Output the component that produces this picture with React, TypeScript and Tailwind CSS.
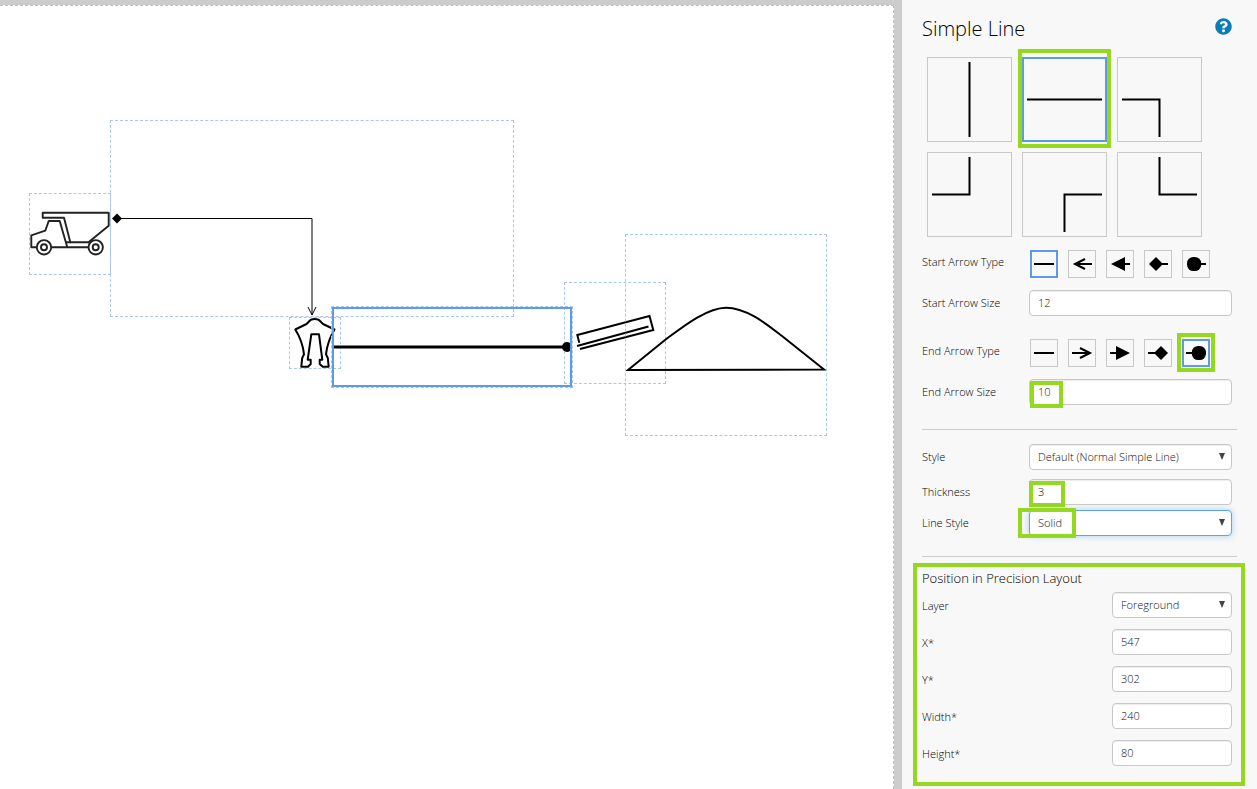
import { useState } from 'react';
import type { ReactNode } from 'react';
import { FaQuestionCircle } from 'react-icons/fa';

const lineShapes = [
    { name: 'Vertical', d: 'M42.5 5V80' },
    { name: 'Horizontal', d: 'M5 42.5H80' },
    { name: 'Left to bottom', d: 'M5 42.5H42.5V80' },
    { name: 'Left to top', d: 'M5 42.5H42.5V5' },
    { name: 'Right to bottom', d: 'M80 42.5H42.5V80' },
    { name: 'Right to top', d: 'M80 42.5H42.5V5' },
];

const arrowTypes = ['None', 'Open', 'Filled', 'Diamond', 'Circle'];

const fieldClass = 'block h-[26px] w-full rounded-[4px] border bg-white px-2 text-[11px] text-[#111] outline-none';
const idleClass = 'border-[#c8c8c8] shadow-[inset_0_1px_1px_rgba(0,0,0,0.08)]';
const focusClass = 'border-[#5aa9e6] shadow-[0_0_6px_rgba(90,169,230,0.5)]';

function Highlight({ className }: { className: string }) {
    return <span className={`pointer-events-none absolute border-4 border-[#95d820] ${className}`} />;
}

function ArrowIcon({ type, end }: { type: string; end?: boolean }) {
    return (
        <svg viewBox="0 0 28 28" className="h-[28px] w-[28px] shrink-0" stroke="#000" strokeWidth="2" fill="none">
            {type === 'None' && <path d="M4 14H24" />}
            <g transform={end ? 'translate(29 0) scale(-1 1)' : 'translate(0 0)'}>
                {type === 'Open' && <path d={end ? 'M7 14H25M17 9L7 14L17 19' : 'M7 14H24M17 9L7 14L17 19'} />}
                {type === 'Filled' && (
                    <>
                        <path d={end ? 'M15 14H25' : 'M15 14H24'} />
                        <path d="M5 14L19 7V21Z" fill="#000" stroke="none" />
                    </>
                )}
                {type === 'Diamond' && (
                    <>
                        <path d={end ? 'M12 14H25' : 'M12 14H24'} />
                        <path d="M5 14L12 7L19 14L12 21Z" fill="#000" stroke="none" />
                    </>
                )}
                {type === 'Circle' && (
                    <>
                        <path d={end ? 'M12 14H25' : 'M12 14H24'} />
                        <rect x="5" y="7" width="14.2" height="14" rx="6.4" fill="#000" stroke="none" />
                    </>
                )}
            </g>
        </svg>
    );
}

function ArrowPicker({ label, value, onChange, end, children }: {
    label: string;
    value: string;
    onChange: (type: string) => void;
    end?: boolean;
    children?: ReactNode;
}) {
    return (
        <div className="flex items-center" role="group" aria-label={label}>
            <span className="w-[108px] shrink-0 pb-1 text-[11px]">{label}</span>
            <div className="relative flex gap-[10px]">
                {arrowTypes.map(type => (
                    <button
                        key={type}
                        type="button"
                        aria-label={type}
                        onClick={() => onChange(type)}
                        className={`flex h-[28px] w-[28px] items-center justify-center ${value === type ? 'border-2 border-[#5e9aea]' : 'border border-[#c8c8c8]'}`}
                    >
                        <ArrowIcon type={type} end={end} />
                    </button>
                ))}
                {children}
            </div>
        </div>
    );
}

function Field({ id, label, children }: { id: string; label: string; children: ReactNode }) {
    return (
        <div className="flex items-center pr-[5px]">
            <label htmlFor={id} className="w-[107px] shrink-0 text-[11px]">{label}</label>
            <div className="relative flex-1">{children}</div>
        </div>
    );
}

function PositionField({ id, label, children }: { id: string; label: string; children: ReactNode }) {
    return (
        <div className="flex h-[26px] items-center justify-between pr-[5px]">
            <label htmlFor={id} className="pt-[3px] text-[11px]">{label}</label>
            <div className="w-[120px]">{children}</div>
        </div>
    );
}

function TextInput({ id, value }: { id: string; value: string }) {
    return <input id={id} className={`${fieldClass} ${idleClass} pb-[2px]`} defaultValue={value} />;
}

function Select({ id, options, focused }: { id: string; options: string[]; focused?: boolean }) {
    return (
        <div className="relative">
            <select id={id} className={`${fieldClass} appearance-none ${focused ? focusClass : idleClass}`}>
                {options.map(option => <option key={option}>{option}</option>)}
            </select>
            <svg viewBox="0 0 6 7" className="pointer-events-none absolute top-[9px] right-[7px] h-[7px] w-[6px]">
                <path d="M0 0H6L3 7Z" fill="#444" />
            </svg>
        </div>
    );
}

function Canvas() {
    const node = 'absolute outline-1 -outline-offset-1 outline-dashed outline-[#a9c6f2]';
    return (
        <main className="flex min-w-0 flex-1 bg-[#ccc] pt-[5px] pr-2">
            <div className="relative flex-1 overflow-hidden border-t border-r border-dashed border-[#a9c0e8] bg-white">
                {/* truck */}
                <div className={`${node} top-[187px] left-[29px] h-[82px] w-[82px]`}>
                    <svg viewBox="29 193 82 82" className="h-full w-full" fill="none" stroke="#222" strokeWidth="1.9" strokeLinejoin="round">
                        <path d="M42.7 212.7H108.7V225.7L88.5 242.3H70.3L64 217.7H42.7Z" />
                        <path d="M36.7 247.3H31.3V235.3L45.3 230.7L48.7 221H59.7L67.3 247.3M66 242.3H71M52 247.3H88" />
                        <circle cx="44" cy="247.3" r="7.2" />
                        <circle cx="44" cy="247.3" r="3" />
                        <circle cx="95.7" cy="247.3" r="7.2" />
                        <circle cx="95.7" cy="247.3" r="3" />
                    </svg>
                </div>

                {/* elbow connector */}
                <div className={`${node} top-[114px] left-[110px] h-[197px] w-[404px]`}>
                    <svg viewBox="110 120 404 197" className="h-full w-full" fill="none" stroke="#000">
                        <path d="M117 218.5H312V315" />
                        <path d="M308 307L312 315L316 307" />
                        <path d="M112 218.5L117 213.5L122 218.5L117 223.5Z" fill="#000" stroke="none" />
                    </svg>
                </div>

                {/* grabber */}
                <div className={`${node} top-[311px] left-[289px] h-[52px] w-[52px]`}>
                    <svg viewBox="289 317 52 52" className="h-full w-full" fill="none" stroke="#000" strokeWidth="2" strokeLinejoin="round">
                        <path d="M309 321.5C311 318 318.5 318 320.5 321.5L323 324L334.5 329.5C330 337 327 345 326 354.3L327.8 358L328.7 366.7H322.7L319.7 364V359.7H322.3L319 334.3H311.3L307.7 359.7H310.7V364L308 366.7H301.3L302.2 358L304 354.3C303 345 300 337 295.3 329.5L306.5 324Z" />
                    </svg>
                </div>

                {/* conveyor */}
                <div className={`${node} top-[276px] left-[564px] h-[102px] w-[102px]`}>
                    <svg viewBox="564 282 102 102" className="h-full w-full" fill="none" stroke="#000" strokeWidth="2">
                        <path d="M579.3 342.7L577.3 335L649.5 316L653.3 330L580 349M577 346L648.5 326.5" />
                    </svg>
                </div>

                {/* stockpile */}
                <div className={`${node} top-[228px] left-[625px] h-[202px] w-[202px]`}>
                    <svg viewBox="625 234 202 202" className="h-full w-full" fill="none" stroke="#000" strokeWidth="2">
                        <path d="M628 370L665 340C680 329 706 307.7 726 307.7C748 307.7 770 327 782 336L824 369.5Z" />
                    </svg>
                </div>

                {/* selected line */}
                <div className="absolute top-[301px] left-[332px] h-[80px] w-[240px] border-2 border-[#5e9aea] outline-1 outline-dashed outline-[#a9c6f2]">
                    <svg viewBox="334 309 236 76" className="h-full w-full" stroke="#000" strokeWidth="3">
                        <path d="M334 347H567" />
                        <circle cx="567" cy="347" r="5" stroke="none" />
                    </svg>
                </div>
            </div>
        </main>
    );
}

export default function App() {
    const [shape, setShape] = useState('Horizontal');
    const [startArrow, setStartArrow] = useState('None');
    const [endArrow, setEndArrow] = useState('Circle');

    return (
        <div className="flex min-h-screen bg-[#f8f8f8] font-['Open_Sans',sans-serif] font-light text-black">
            <Canvas />

            <aside className="w-[355px] shrink-0 px-[20px]">
                <header className="flex h-[57px] items-center justify-between pr-[5px]">
                    <h1 className="text-[20px] font-light">Simple Line</h1>
                    <button type="button" aria-label="Help" className="pb-[5px] text-[#0b7bb5]">
                        <FaQuestionCircle size={17} />
                    </button>
                </header>

                <div className="flex flex-wrap gap-[10px] px-[5px]">
                    {lineShapes.map(item => (
                        <button
                            key={item.name}
                            type="button"
                            aria-label={item.name}
                            onClick={() => setShape(item.name)}
                            className={`relative flex h-[85px] w-[85px] items-center justify-center ${shape === item.name ? 'border-2 border-[#5e9aea]' : 'border border-[#c8c8c8]'}`}
                        >
                            <svg viewBox="0 0 85 85" className="h-[85px] w-[85px] shrink-0" fill="none" stroke="#000" strokeWidth="2">
                                <path d={item.d} />
                            </svg>
                            {item.name === 'Horizontal' && <Highlight className="-top-[10px] -right-[6px] -bottom-[8px] -left-[6px]" />}
                        </button>
                    ))}
                </div>

                <div className="mt-[13px] flex flex-col gap-3">
                    <ArrowPicker label="Start Arrow Type" value={startArrow} onChange={setStartArrow} />
                    <Field id="start-size" label="Start Arrow Size">
                        <TextInput id="start-size" value="12" />
                    </Field>
                </div>

                <div className="mt-[23px] flex flex-col gap-3">
                    <ArrowPicker label="End Arrow Type" value={endArrow} onChange={setEndArrow} end>
                        <Highlight className="-top-[6px] -right-[5px] -bottom-[5px] w-[38px]" />
                    </ArrowPicker>
                    <Field id="end-size" label="End Arrow Size">
                        <TextInput id="end-size" value="10" />
                        <Highlight className="top-[2px] left-px h-[27px] w-[33px]" />
                    </Field>
                </div>

                <hr className="mt-[24px] border-[#ccc]" />

                <div className="mt-[14px]">
                    <Field id="style" label="Style">
                        <Select id="style" options={['Default (Normal Simple Line)']} />
                    </Field>
                </div>
                <div className="mt-[9px] flex flex-col gap-[5px]">
                    <Field id="thickness" label="Thickness">
                        <TextInput id="thickness" value="3" />
                        <Highlight className="top-[2px] left-0 h-[26px] w-[36px]" />
                    </Field>
                    <Field id="line-style" label="Line Style">
                        <Select id="line-style" options={['Solid', 'Dashed', 'Dotted']} focused />
                        <Highlight className="-top-[2px] -left-[11px] h-[30px] w-[58px]" />
                    </Field>
                </div>

                <hr className="mt-[20px] border-[#ccc]" />

                <section className="relative mt-[11px]">
                    <Highlight className="-top-[5px] -right-[8px] -bottom-[20px] -left-[9px]" />
                    <h2 className="mb-1 text-[13px] leading-[20px] font-light">Position in Precision Layout</h2>
                    <div className="flex flex-col gap-[11px]">
                        <PositionField id="layer" label="Layer">
                            <Select id="layer" options={['Foreground', 'Background']} />
                        </PositionField>
                        <PositionField id="x" label="X*">
                            <TextInput id="x" value="547" />
                        </PositionField>
                        <PositionField id="y" label="Y*">
                            <TextInput id="y" value="302" />
                        </PositionField>
                        <PositionField id="width" label="Width*">
                            <TextInput id="width" value="240" />
                        </PositionField>
                        <PositionField id="height" label="Height*">
                            <TextInput id="height" value="80" />
                        </PositionField>
                    </div>
                </section>
            </aside>
        </div>
    );
}
